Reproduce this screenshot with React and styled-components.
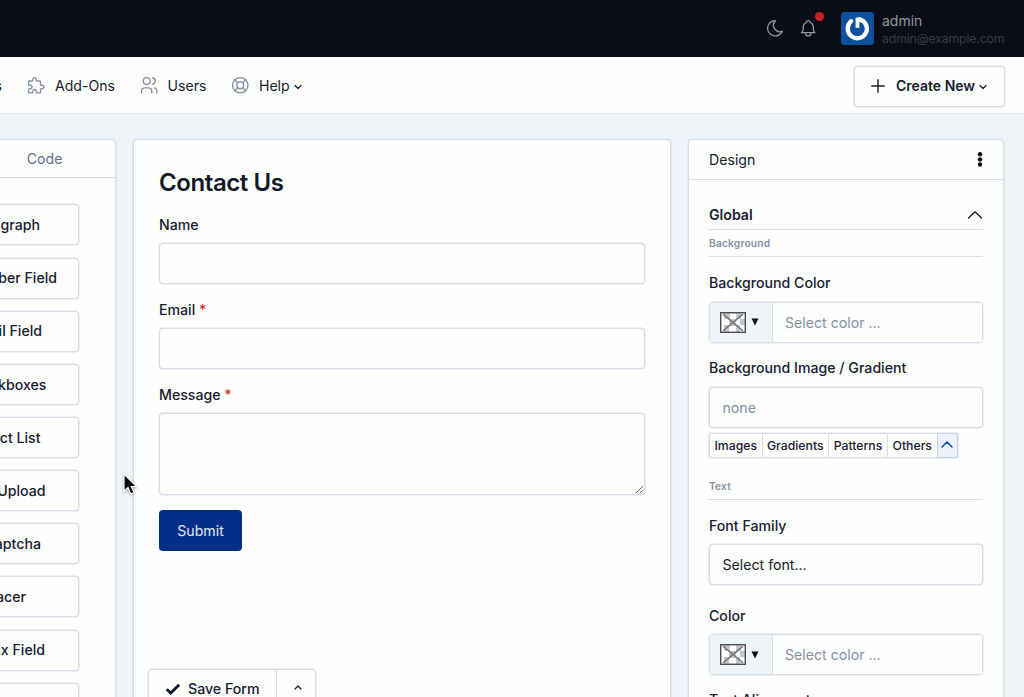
import React from "react";
import styled, { createGlobalStyle } from "styled-components";
import { TbPuzzle, TbUsers, TbLifebuoy, TbMoon, TbBell } from "react-icons/tb";

const line = "#d7dee7";
const ink = "#182030";

const Global = createGlobalStyle`
  * { box-sizing: border-box; }
  body { margin: 0; overflow: hidden; background: #eff4f9; }
  body, input, textarea, button { font-family: Inter, "Liberation Sans", sans-serif; font-size: 14.15px; color: ${ink}; }
`;

const Page = styled.div`
  width: 1024px; height: 697px; overflow: hidden;
  display: flex; flex-direction: column;
`;
const TopBar = styled.header`
  flex: none; height: 57px; background: #0a0d17; color: #9397a0;
  display: flex; align-items: center; justify-content: flex-end; padding-right: 20px;
  svg { display: block; }
`;
const Bell = styled.div`
  position: relative; margin-left: 12.5px;
`;
const Dot = styled.span`
  position: absolute; right: -5px; top: -6px; width: 9px; height: 9px; border-radius: 50%; background: #cb1f23;
`;
const Avatar = styled.svg`
  margin: 0 8px 0 22.5px;
`;
const Account = styled.div`
  width: 122px; white-space: nowrap; line-height: 19px; font-size: 14px;
`;
const Mail = styled.div`
  font-size: 12.3px; color: #363e4a; line-height: 17px; letter-spacing: -0.15px;
`;

const Nav = styled.nav`
  flex: none; height: 57px; background: #fefefe; border-bottom: 1px solid #dde4eb;
  display: flex; align-items: center; padding: 2px 19.5px 0 0;
`;
const NavItem = styled.a`
  display: flex; align-items: center; white-space: nowrap; margin-right: ${(p) => p.$after || 0}px;
  font-size: 14.1px; line-height: 18px; margin-top: -1px;
  svg.kind { color: #8491a5; margin-right: ${(p) => p.$gap || 8}px; flex: none; }
`;
const NavClip = styled(NavItem)`
  width: 2px; justify-content: flex-end;
`;
const CreateButton = styled.button`
  margin-left: auto; width: 150.5px; height: 41px; background: #fefefe; border: 1px solid ${line}; border-radius: 4px;
  box-shadow: 0 0 0 0.5px ${line};
  display: flex; align-items: center; padding: 0 0 1px 15px; font-weight: 600; font-size: 14px; white-space: nowrap;
`;

const Main = styled.main`
  flex: 1; min-height: 0; display: flex; gap: 17px; padding-top: 25px; margin-left: -200px;
`;
const Panel = styled.section`
  flex: none; width: ${(p) => p.$w}px; height: 620px; background: #fefefe; border: 1px solid ${line};
  border-radius: 4px; box-shadow: 0 0 0 0.5px ${line};
  display: flex; flex-direction: column;
`;
const PanelHead = styled.div`
  flex: none; height: ${(p) => p.$h}px; border-bottom: 1px solid ${line};
  display: flex; align-items: center; justify-content: space-between; padding: 0 20px;
`;
const Tab = styled.span`
  flex: 1; text-align: ${(p) => p.$align}; color: #647083; padding-right: ${(p) => p.$pad}px;
`;
const Palette = styled.div`
  display: flex; flex-direction: column; align-items: flex-end; gap: 12.15px; padding: 26.4px 36px 0 0;
`;
const FieldButton = styled.button`
  flex: none; width: 132px; height: 41px; background: #fefefe; border: 1px solid ${line}; border-radius: 4px;
  box-shadow: 0 0 0 0.5px ${line};
  font-weight: 500; text-align: right; white-space: nowrap; padding: 0 ${(p) => p.$pad}px 0.5px 0;
`;

const Canvas = styled.div`
  flex: none; height: 528.5px; padding: 26px 25px 0 25px; display: flex; flex-direction: column; align-items: stretch;
`;
const Title = styled.h1`
  margin: 0 0 14px; font-size: 24px; line-height: 34px; font-weight: 600; letter-spacing: -0.42px; color: #111827;
`;
const Label = styled.label`
  display: block; font-weight: 500; line-height: 22px; height: ${(p) => p.$h || 29}px; white-space: nowrap;
  i { color: #d5242b; font-style: normal; }
`;
const Input = styled.input`
  display: block; width: 100%; height: 41px; background: #fefefe; border: 1px solid ${line}; border-radius: 4px;
  box-shadow: 0 0 0 0.5px ${line};
  padding: 0 12.5px; outline: none; margin-bottom: ${(p) => p.$after || 0}px;
  &::placeholder { color: ${(p) => (p.$dark ? ink : "#8492a6")}; opacity: 1; }
`;
const Area = styled.textarea`
  display: block; width: 100%; height: 82px; background: #fefefe; border: 1px solid ${line}; border-radius: 4px;
  box-shadow: 0 0 0 0.5px ${line};
  outline: none; resize: vertical; margin-bottom: 15px;
`;
const Submit = styled.button`
  width: 83px; height: 41px; border: 0; border-radius: 4px; background: #042f88; color: #e3e9f4;
`;
const SaveGroup = styled.div`
  width: 168px; height: 41px; margin-left: 14px; border: 1px solid ${line}; border-radius: 4px; display: flex;
  box-shadow: 0 0 0 0.5px ${line};
`;
const Save = styled.button`
  width: 128px; padding: 0 0 1px 16px; border: 0; border-right: 1px solid ${line}; background: none; font-weight: 500;
  display: flex; align-items: center; gap: 7px; white-space: nowrap;
`;
const SaveMore = styled.button`
  flex: 1; border: 0; background: none; display: flex; align-items: center; justify-content: center; padding: 0 0 3px 3px;
`;

const Design = styled.div`
  padding: 24px 20px 0;
`;
const GroupHead = styled.div`
  height: 26px; border-bottom: 1px solid ${line}; display: flex; justify-content: space-between;
  font-weight: 600; line-height: 22px;
`;
const SubHead = styled.div`
  height: ${(p) => p.$h}px; padding-top: ${(p) => p.$top}px; border-bottom: 1px solid ${line}; margin-bottom: 15px;
  font-size: 10.2px; line-height: 16px; font-weight: 600; color: #8592a4; letter-spacing: 0.19px;
`;
const ColorRow = styled.div`
  display: flex; height: 41px; border: 1px solid ${line}; border-radius: 4px; margin-bottom: ${(p) => p.$after}px;
  overflow: hidden; box-shadow: 0 0 0 0.5px ${line};
  input { border: 0; height: 100%; flex: 1; min-width: 0; border-radius: 0; box-shadow: none; }
`;
const Swatch = styled.div`
  flex: none; width: 62.5px; background: #eff4f9; border-right: 1px solid ${line};
  display: flex; align-items: center; padding-left: 10px; gap: 5px;
`;
const Chips = styled.div`
  display: flex; width: 248.5px; height: 25px; margin-top: 5px; border: 1px solid ${line}; border-radius: 2px;
  box-shadow: 0 0 0 0.5px ${line};
`;
const Chip = styled.button`
  width: ${(p) => p.$w}px; flex: none; padding: 0; border: 0; border-right: 1px solid ${line}; background: none;
  font-size: 12.25px; font-weight: 500; white-space: nowrap;
`;
const ChipToggle = styled.button`
  flex: 1; border: 0; padding: 0; background: #edf2f9; box-shadow: 0 0 0 1px #c6d0de;
  display: flex; align-items: center; justify-content: center;
`;
const Cursor = styled.svg`
  position: absolute; left: 121.5px; top: 472px; filter: drop-shadow(0 1px 1px rgba(0, 0, 0, 0.35));
`;

const Caret = ({ up, size = 8, color = ink, width = 1.3, ml = 0, drop = 0 }) => (
  <svg width={size} height={size / 2 + 2} viewBox={`0 0 ${size} ${size / 2 + 2}`} fill="none" stroke={color}
    strokeWidth={width} strokeLinecap="round" strokeLinejoin="round" style={{ marginLeft: ml, marginTop: drop, flex: "none" }}>
    {up
      ? <path d={`M1 ${size / 2}L${size / 2} 1L${size - 1} ${size / 2}`} />
      : <path d={`M1 1.5L${size / 2} ${size / 2 + 0.5}L${size - 1} 1.5`} />}
  </svg>
);

const ColorPicker = ({ after }) => (
  <ColorRow $after={after}>
    <Swatch>
      <svg width="26" height="21" viewBox="0 0 26 21">
        <rect width="26" height="21" fill="#fff" />
        <path d="M4 1h6v6H4zM16 1h5v6h-5zM9 7h7v7H9zM20 7h5v6h-5zM4 13h5v7H4zM16 13h4v7h-4z" fill="#c6c6c8" />
        <path d="M3 2.2L23 18.8M23 2.2L3 18.8" stroke="#77777b" strokeWidth="1.5" />
        <rect x="0.7" y="0.7" width="24.6" height="19.6" fill="none" stroke="#4b4b50" strokeWidth="1.4" />
      </svg>
      <svg width="8" height="8"><path d="M0.5 0.5h7L4 7.5z" fill="#111" /></svg>
    </Swatch>
    <Input placeholder="Select color ..." />
  </ColorRow>
);

const fields = [
  ["Paragraph", 38], ["Number Field", 21], ["Email Field", 36], ["Checkboxes", 31.5], ["Select List", 37.5],
  ["File Upload", 32.5], ["reCaptcha", 37], ["Spacer", 52], ["Matrix Field", 33], ["Signature", 36],
];

export default function App() {
  return (
    <Page>
      <Global />
      <TopBar>
        <TbMoon size={20.5} strokeWidth={1.5} />
        <Bell><TbBell size={20.5} strokeWidth={1.5} /><Dot /></Bell>
        <Avatar width="33" height="33" viewBox="0 0 33 33">
          <rect width="33" height="33" rx="3.5" fill="#0b519d" />
          <path d="M10.2 9.2A9.6 9.6 0 1 0 18.6 7.3" fill="none" stroke="#fff" strokeWidth="4.3" strokeLinecap="round" />
          <path d="M16.5 5.6V15.8" stroke="#fff" strokeWidth="3.8" />
        </Avatar>
        <Account>admin<Mail>admin@example.com</Mail></Account>
      </TopBar>
      <Nav>
        <NavClip $after={24}>Forms</NavClip>
        <NavItem $after={24} $gap={8.5}><TbPuzzle className="kind" size={20.5} strokeWidth={1.6} />Add-Ons</NavItem>
        <NavItem $after={24}><TbUsers className="kind" size={20.5} strokeWidth={1.6} />Users</NavItem>
        <NavItem><TbLifebuoy className="kind" size={20.5} strokeWidth={1.6} />Help<Caret ml={4} drop={2} /></NavItem>
        <CreateButton>
          <svg width="16" height="16" viewBox="0 0 16 16" stroke={ink} strokeWidth="1.4" strokeLinecap="round" style={{ marginRight: 10 }}>
            <path d="M8 1.8v12.4M1.8 8h12.4" />
          </svg>
          Create New<Caret ml={4} drop={2} />
        </CreateButton>
      </Nav>
      <Main>
        <Panel $w={316}>
          <PanelHead $h={38}><Tab $align="right" $pad={32.5}>Code</Tab></PanelHead>
          <Palette>
            {fields.map(([name, pad]) => <FieldButton key={name} $pad={pad}>{name}</FieldButton>)}
          </Palette>
        </Panel>
        <Panel $w={538}>
          <Canvas>
            <Title>Contact Us</Title>
            <Label>Name</Label>
            <Input $after={15} />
            <Label>Email <i>*</i></Label>
            <Input $after={15} />
            <Label>Message <i>*</i></Label>
            <Area />
            <Submit>Submit</Submit>
          </Canvas>
          <SaveGroup>
            <Save>
              <svg width="16" height="12" viewBox="0 0 16 12"><path d="M1.7 6.2L5.7 10L14.2 1.8" fill="none" stroke="#111827" strokeWidth="2.9" /></svg>
              Save Form
            </Save>
            <SaveMore><Caret up size={8} width={1.3} /></SaveMore>
          </SaveGroup>
        </Panel>
        <Panel $w={316}>
          <PanelHead $h={40}>
            Design
            <svg width="6" height="15" viewBox="0 0 6 15" fill="#0c0f17"><circle cx="3" cy="2.3" r="2.2" /><circle cx="3" cy="7.4" r="2.2" /><circle cx="3" cy="12.5" r="2.2" /></svg>
          </PanelHead>
          <Design>
            <GroupHead>Global
              <svg width="16" height="22" viewBox="0 0 16 22" fill="none" stroke={ink} strokeWidth="1.4" strokeLinecap="round" strokeLinejoin="round"><path d="M1.5 14L8 7.8L14.5 14" /></svg>
            </GroupHead>
            <SubHead $h={27} $top={5}>Background</SubHead>
            <Label $h={29.5}>Background Color</Label>
            <ColorPicker after={14.5} />
            <Label $h={29.5}>Background Image / Gradient</Label>
            <Input placeholder="none" />
            <Chips>
              <Chip $w={52.5}>Images</Chip><Chip $w={66.5}>Gradients</Chip><Chip $w={59}>Patterns</Chip><Chip $w={49.5}>Others</Chip>
              <ChipToggle><Caret up size={12} color="#0b4aa5" width={1.5} /></ChipToggle>
            </Chips>
            <SubHead $h={42} $top={20}>Text</SubHead>
            <Label $h={29.5}>Font Family</Label>
            <Input $dark placeholder="Select font..." $after={20} />
            <Label $h={29}>Color</Label>
            <ColorPicker after={14} />
            <Label>Text Alignment</Label>
          </Design>
        </Panel>
      </Main>
      <Cursor width="16" height="24" viewBox="0 0 16 24">
        <path d="M2 2V19.3L6 15.6L8.7 22L12 20.6L9.3 14.5H14.5Z" fill="#0a0a0c" stroke="#fff" strokeWidth="1.2" />
      </Cursor>
    </Page>
  );
}
